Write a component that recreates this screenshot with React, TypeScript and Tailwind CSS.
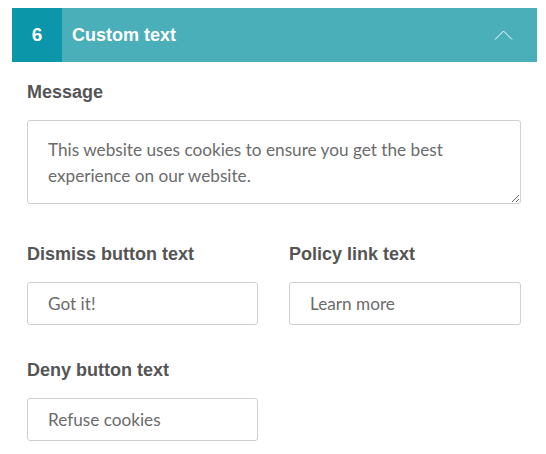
import { useState } from "react";

function Field({ label, value }: { label: string; value: string }) {
  const [v, setV] = useState(value);
  return (
    <div>
      <label className="block text-[18px] font-bold text-[#555] leading-5 font-['Liberation_Sans',Arial,sans-serif]">{label}</label>
      <input
        value={v}
        onChange={(e) => setV(e.target.value)}
        className="mt-[18px] block w-full h-[43px] rounded-[3px] border border-[#d0d0d0] bg-white px-5 text-[17.2px] text-[#6b6b6b] font-['Lato',sans-serif] outline-none"
      />
    </div>
  );
}

export default function App() {
  const [msg, setMsg] = useState("This website uses cookies to ensure you get the best experience on our website.");
  return (
    <div className="bg-white min-h-[454px] pt-2 pl-3 pr-[9px]">
      {/* section header */}
      <div className="flex h-[54px] items-center bg-[#4bafba] text-white font-['Liberation_Sans',Arial,sans-serif]">
        <div className="flex h-full w-[50px] items-center justify-center bg-[#0b96aa] text-[19px] font-bold">6</div>
        <p className="ml-[10px] flex-1 text-[18px] font-bold">Custom text</p>
        <svg width="19" height="10" viewBox="0 0 19 10" className="mr-[24px]" fill="none" stroke="white" strokeWidth="1">
          <path d="M1 9.5 L9.5 1 L18 9.5" />
        </svg>
      </div>

      <div className="pl-[15px] pr-[16px] pt-[20px]">
        <label className="block text-[18px] font-bold text-[#555] leading-5 font-['Liberation_Sans',Arial,sans-serif]">Message</label>
        <textarea
          value={msg}
          onChange={(e) => setMsg(e.target.value)}
          className="mt-[18px] block w-full h-[84px] rounded-[3px] border border-[#d0d0d0] bg-white px-5 pt-[16px] text-[17.2px] leading-[26px] text-[#6b6b6b] font-['Lato',sans-serif] outline-none"
        />

        <div className="mt-[40px] grid grid-cols-[231px_1fr] gap-x-[31px]">
          <Field label="Dismiss button text" value="Got it!" />
          <Field label="Policy link text" value="Learn more" />
        </div>

        <div className="mt-[35px] grid grid-cols-[231px_1fr] gap-x-[31px]">
          <Field label="Deny button text" value="Refuse cookies" />
        </div>
      </div>
    </div>
  );
}
